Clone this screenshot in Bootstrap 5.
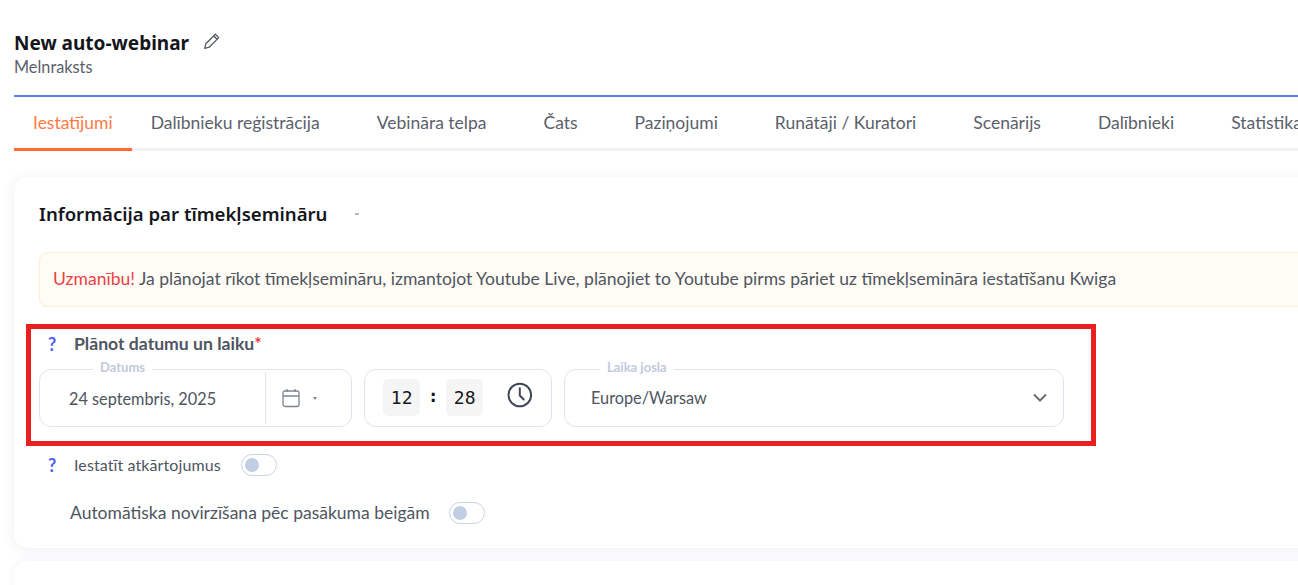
<!DOCTYPE html>
<html lang="lv">
<head>
    <meta charset="UTF-8">
    <title>New auto-webinar</title>
    <link href="https://cdn.jsdelivr.net/npm/bootstrap@5.3.2/dist/css/bootstrap.min.css" rel="stylesheet">
    <style>
        html, body { height: 100%; overflow: hidden; }
        body { background: #fff; font-family: "Lato", "Liberation Sans", sans-serif; color: #4f5561; }
        .page-wrap { width: 1340px; padding-left: 14px; position: relative; height: 585px; overflow: hidden; }
        .head-block { height: 95px; padding-top: 31px; }
        .page-title { font-family: "Noto Sans", sans-serif; font-weight: 700; font-size: 19px; line-height: 25px; color: #14161c; margin: 0; }
        .pencil-icon { margin-left: 14px; margin-top: -5px; }
        .draft-text { font-size: 16.3px; line-height: 20px; color: #5a606c; margin-top: 1px; }
        .tab-strip { border-top: 2px solid #5f7ef5; border-bottom: 3px solid #f2f2f3; height: 56px; }
        .tab-item { padding: 0 19px; margin-right: 19px; height: 54px; line-height: 51px; font-size: 17.5px; color: #5a5f6b; white-space: nowrap; margin-bottom: -3px; }
        .tab-item.on { color: #ff7a45; border-bottom: 3px solid #ff6d33; margin-right: 0; }
        .info-panel { margin-top: 26px; height: 371px; border-radius: 14px; background: #fff; box-shadow: 0 2px 14px rgba(60, 80, 130, .09); padding: 24px 0 0 25px; }
        .panel-title { font-family: "Noto Sans", sans-serif; font-weight: 600; font-size: 18.6px; line-height: 26px; color: #14161c; margin: 0; }
        .tiny-dot { width: 4px; height: 2px; background: #b5b8bf; margin-left: 28px; }
        .warn-box { margin-top: 25px; height: 55px; background: #fffcf5; border: 1px solid #fbf0cf; border-radius: 8px; padding: 0 13px; line-height: 52px; font-size: 17.55px; color: #4f5561; }
        .warn-red { color: #ec3f46; }
        .hint-mark { width: 35px; color: #4c5ff0; font-weight: 700; font-size: 18px; line-height: 24px; padding-left: 9px; flex: none; }
        .label-row { margin-top: 25px; }
        .field-label { font-size: 17.6px; font-weight: 700; color: #4f5561; line-height: 24px; }
        .req-star { color: #ec3f46; }
        .field-row { margin-top: 13px; gap: 12px; }
        .outline-box { position: relative; height: 58px; border: 1px solid #e2e4ee; border-radius: 12px; background: #fff; }
        .legend-text { position: absolute; top: -11px; background: #fff; padding: 0 7px; font-size: 13px; line-height: 16px; font-weight: 700; color: #c2cadb; }
        .legend-date { left: 53px; }
        .legend-zone { left: 35px; }
        .date-box { width: 313px; }
        .date-value { width: 226px; padding-left: 29px; font-size: 16.3px; height: 52px; margin-top: 2px; line-height: 54px; border-right: 1px solid #e2e4ee; flex: none; }
        .caret-icon { margin-left: 13px; }
        .time-box { width: 188px; padding: 9px 18px; }
        .time-cell { width: 38px; height: 37px; background: #f5f5f5; border-radius: 5px; font-family: "DejaVu Sans Mono", monospace; font-size: 18px; color: #14161c; line-height: 37px; text-align: center; }
        .time-sep { width: 26px; text-align: center; font-family: "DejaVu Sans Mono", monospace; font-weight: 700; font-size: 18px; line-height: 34px; color: #14161c; }
        .clock-icon { margin-top: 3px; }
        .zone-box { width: 500px; padding: 0 15px 0 26px; font-size: 16.3px; }
        .switch-track { width: 36px; height: 22px; border: 1px solid #c9d3e4; border-radius: 11px; background: #fff; padding: 3px; flex: none; }
        .switch-knob { width: 14px; height: 14px; border-radius: 50%; background: #c2cfe2; }
        .repeat-row { margin-top: 26px; }
        .redirect-row { margin-top: 24px; }
        .small-label { font-size: 16px; line-height: 22px; letter-spacing: .1px; margin-right: 20px; }
        .big-label { font-size: 17.5px; line-height: 24px; padding-left: 31px; margin-right: 19px; }
        .next-panel { margin-top: 13px; height: 60px; border-radius: 14px 14px 0 0; background: #fff; box-shadow: 0 -2px 10px rgba(60, 80, 130, .06); }
        .mark-frame { position: absolute; left: 26px; top: 324px; width: 1070px; height: 122px; border: 5px solid #e8201f; pointer-events: none; }
    </style>
</head>
<body>
<div class="page-wrap">
    <div class="head-block">
        <div class="d-flex align-items-center">
            <h1 class="page-title">New auto-webinar</h1>
            <svg class="pencil-icon" width="18" height="18" viewBox="0 0 16 16" fill="none" stroke="#4f5561" stroke-width="1.1" stroke-linejoin="round">
                <path d="M1.500 14.500l1-4L11 2l3 3-8.500 8.500z"/><path d="M9.500 3.500l3 3"/>
            </svg>
        </div>
        <div class="draft-text">Melnraksts</div>
    </div>

    <div class="tab-strip d-flex">
        <div class="tab-item on">Iestatījumi</div>
        <div class="tab-item">Dalībnieku reģistrācija</div>
        <div class="tab-item">Vebināra telpa</div>
        <div class="tab-item">Čats</div>
        <div class="tab-item">Paziņojumi</div>
        <div class="tab-item">Runātāji / Kuratori</div>
        <div class="tab-item">Scenārijs</div>
        <div class="tab-item">Dalībnieki</div>
        <div class="tab-item">Statistika</div>
    </div>

    <div class="info-panel">
        <div class="d-flex align-items-center">
            <h2 class="panel-title">Informācija par tīmekļsemināru</h2>
            <div class="tiny-dot"></div>
        </div>
        <div class="warn-box"><span class="warn-red">Uzmanību!</span> Ja plānojat rīkot tīmekļsemināru, izmantojot Youtube Live, plānojiet to Youtube pirms pāriet uz tīmekļsemināra iestatīšanu Kwiga</div>

        <div class="d-flex label-row">
            <div class="hint-mark">?</div>
            <div class="field-label">Plānot datumu un laiku<span class="req-star">*</span></div>
        </div>
        <div class="d-flex field-row">
            <div class="outline-box date-box d-flex">
                <span class="legend-text legend-date">Datums</span>
                <div class="date-value">24 septembris, 2025</div>
                <div class="d-flex align-items-center ps-3">
                    <svg width="18" height="20" viewBox="0 0 18 20" fill="none" stroke="#7d8594" stroke-width="1.300">
                        <rect x="1" y="3" width="16" height="15.500" rx="2"/><path d="M1 8h16M5 1v3M13 1v3"/>
                    </svg>
                    <svg class="caret-icon" width="4" height="3" viewBox="0 0 4 3"><path d="M0 0h4L2 3z" fill="#7d8594"/></svg>
                </div>
            </div>
            <div class="outline-box time-box d-flex">
                <div class="time-cell">12</div>
                <div class="time-sep">:</div>
                <div class="time-cell">28</div>
                <svg class="ms-4 clock-icon" width="26" height="26" viewBox="0 0 26 26" fill="none" stroke="#3f4654" stroke-width="2" stroke-linecap="round">
                    <circle cx="13" cy="13" r="11.500"/><path d="M13 6v7.500l4 4"/>
                </svg>
            </div>
            <div class="outline-box zone-box d-flex align-items-center justify-content-between">
                <span class="legend-text legend-zone">Laika josla</span>
                <span>Europe/Warsaw</span>
                <svg width="16" height="10" viewBox="0 0 16 10" fill="none" stroke="#6b6f78" stroke-width="2"><path d="M2 1.500l6 6 6-6"/></svg>
            </div>
        </div>

        <div class="d-flex align-items-center repeat-row">
            <div class="hint-mark">?</div>
            <div class="small-label">Iestatīt atkārtojumus</div>
            <div class="switch-track"><div class="switch-knob"></div></div>
        </div>
        <div class="d-flex align-items-center redirect-row">
            <div class="big-label">Automātiska novirzīšana pēc pasākuma beigām</div>
            <div class="switch-track"><div class="switch-knob"></div></div>
        </div>
    </div>
    <div class="next-panel"></div>
    <div class="mark-frame"></div>
</div>
<script src="https://cdn.jsdelivr.net/npm/bootstrap@5.3.2/dist/js/bootstrap.bundle.min.js"></script>
</body>
</html>
